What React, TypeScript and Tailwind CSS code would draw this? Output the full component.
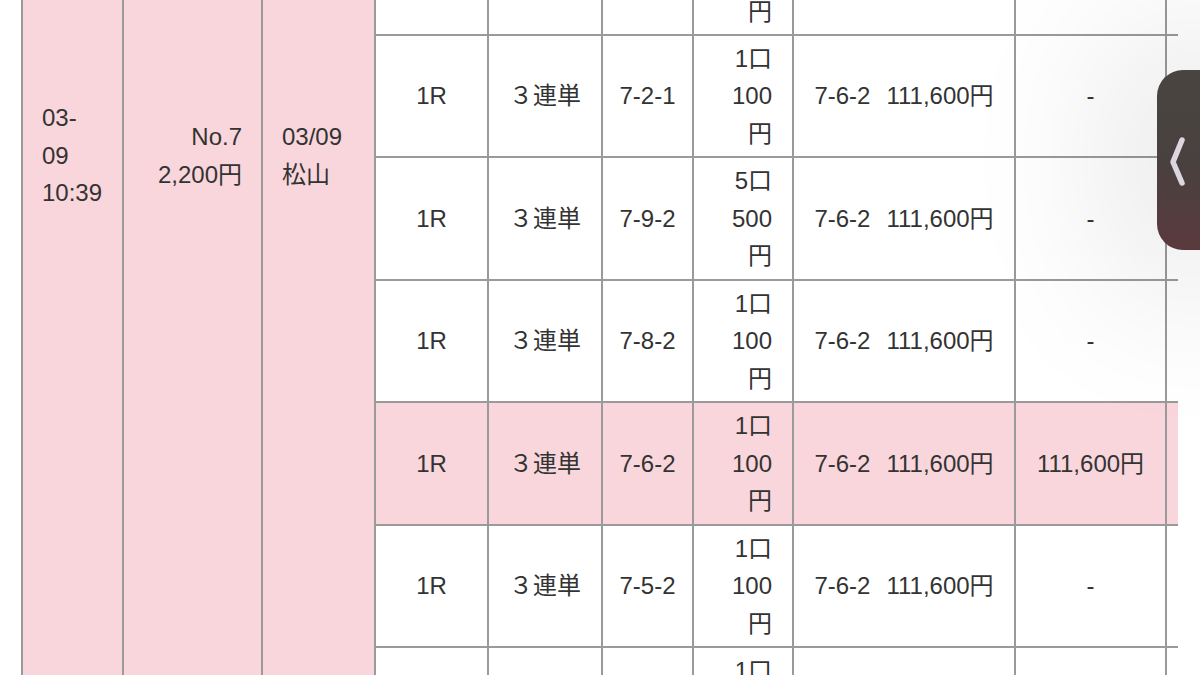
const rows = [
  { race: "", kind: "", pick: "", count: "1口", amount: "100", result: "", payout: "", win: "", hit: false },
  { race: "1R", kind: "３連単", pick: "7-2-1", count: "1口", amount: "100", result: "7-6-2", payout: "111,600円", win: "-", hit: false },
  { race: "1R", kind: "３連単", pick: "7-9-2", count: "5口", amount: "500", result: "7-6-2", payout: "111,600円", win: "-", hit: false },
  { race: "1R", kind: "３連単", pick: "7-8-2", count: "1口", amount: "100", result: "7-6-2", payout: "111,600円", win: "-", hit: false },
  { race: "1R", kind: "３連単", pick: "7-6-2", count: "1口", amount: "100", result: "7-6-2", payout: "111,600円", win: "111,600円", hit: true },
  { race: "1R", kind: "３連単", pick: "7-5-2", count: "1口", amount: "100", result: "7-6-2", payout: "111,600円", win: "-", hit: false },
  { race: "", kind: "", pick: "", count: "1口", amount: "100", result: "", payout: "", win: "", hit: false },
];

export default function App() {
  return (
    <div
      className="relative w-[1200px] h-[675px] overflow-hidden bg-white text-[24px] leading-[37.5px] text-[#333]"
      style={{ fontFamily: '"Liberation Sans", "Noto Sans CJK JP", sans-serif' }}
    >
      <div className="flex h-full pl-[21px]">
        {/* rowspan columns */}
        <div className="w-[103px] shrink-0 border-x-2 border-[#9a9a9a] bg-[#f9d6db] pt-[99px] pl-[19px]">
          <div>03-</div>
          <div>09</div>
          <div>10:39</div>
        </div>
        <div className="w-[139px] shrink-0 border-r-2 border-[#9a9a9a] bg-[#f9d6db] pt-[118px] pr-[19px] text-right">
          <div>No.7</div>
          <div>2,200円</div>
        </div>
        <div className="w-[113px] shrink-0 border-r-2 border-[#9a9a9a] bg-[#f9d6db] pt-[118px] pl-[19px]">
          <div>03/09</div>
          <div>松山</div>
        </div>

        {/* bet rows */}
        <div className="flex flex-col -mt-[86.4px]">
          {rows.map((r, i) => (
            <div
              key={i}
              className={`flex h-[122.4px] shrink-0 border-b-2 border-[#9a9a9a] ${r.hit ? "bg-[#f9d6db]" : "bg-white"}`}
            >
              <div className="w-[113px] shrink-0 border-r-2 border-[#9a9a9a] flex items-center justify-center">
                {r.race}
              </div>
              <div className="w-[114px] shrink-0 border-r-2 border-[#9a9a9a] flex items-center justify-center">
                {r.kind}
              </div>
              <div className="w-[91px] shrink-0 border-r-2 border-[#9a9a9a] flex items-center justify-center">
                {r.pick}
              </div>
              <div className="w-[100px] shrink-0 border-r-2 border-[#9a9a9a] flex flex-col items-end justify-center pr-[20px]">
                <div>{r.count}</div>
                <div>{r.amount}</div>
                <div>円</div>
              </div>
              <div className="w-[222px] shrink-0 border-r-2 border-[#9a9a9a] flex items-center justify-center">
                <span>{r.result}</span>
                {r.payout && <span className="ml-[16px]">{r.payout}</span>}
              </div>
              <div className="w-[151px] shrink-0 border-r-2 border-[#9a9a9a] flex items-center justify-center">
                {r.win}
              </div>
              <div className="w-[11px] shrink-0" />
            </div>
          ))}
        </div>
      </div>

      {/* side drawer tab */}
      <div className="absolute left-[1157px] top-[70px] w-[70px] h-[180px] rounded-[26px] bg-gradient-to-b from-[#4a4541] via-[#48413f] to-[#5a393d] shadow-[0_0_150px_60px_rgba(0,0,0,0.08)]">
        <svg width="40" height="180" viewBox="0 0 40 180" className="absolute left-0 top-0">
          <path d="M25 70 L16 92 L25 113" fill="none" stroke="#dcd6de" strokeWidth="5.5" strokeLinecap="round" strokeLinejoin="round" />
        </svg>
      </div>
    </div>
  );
}
